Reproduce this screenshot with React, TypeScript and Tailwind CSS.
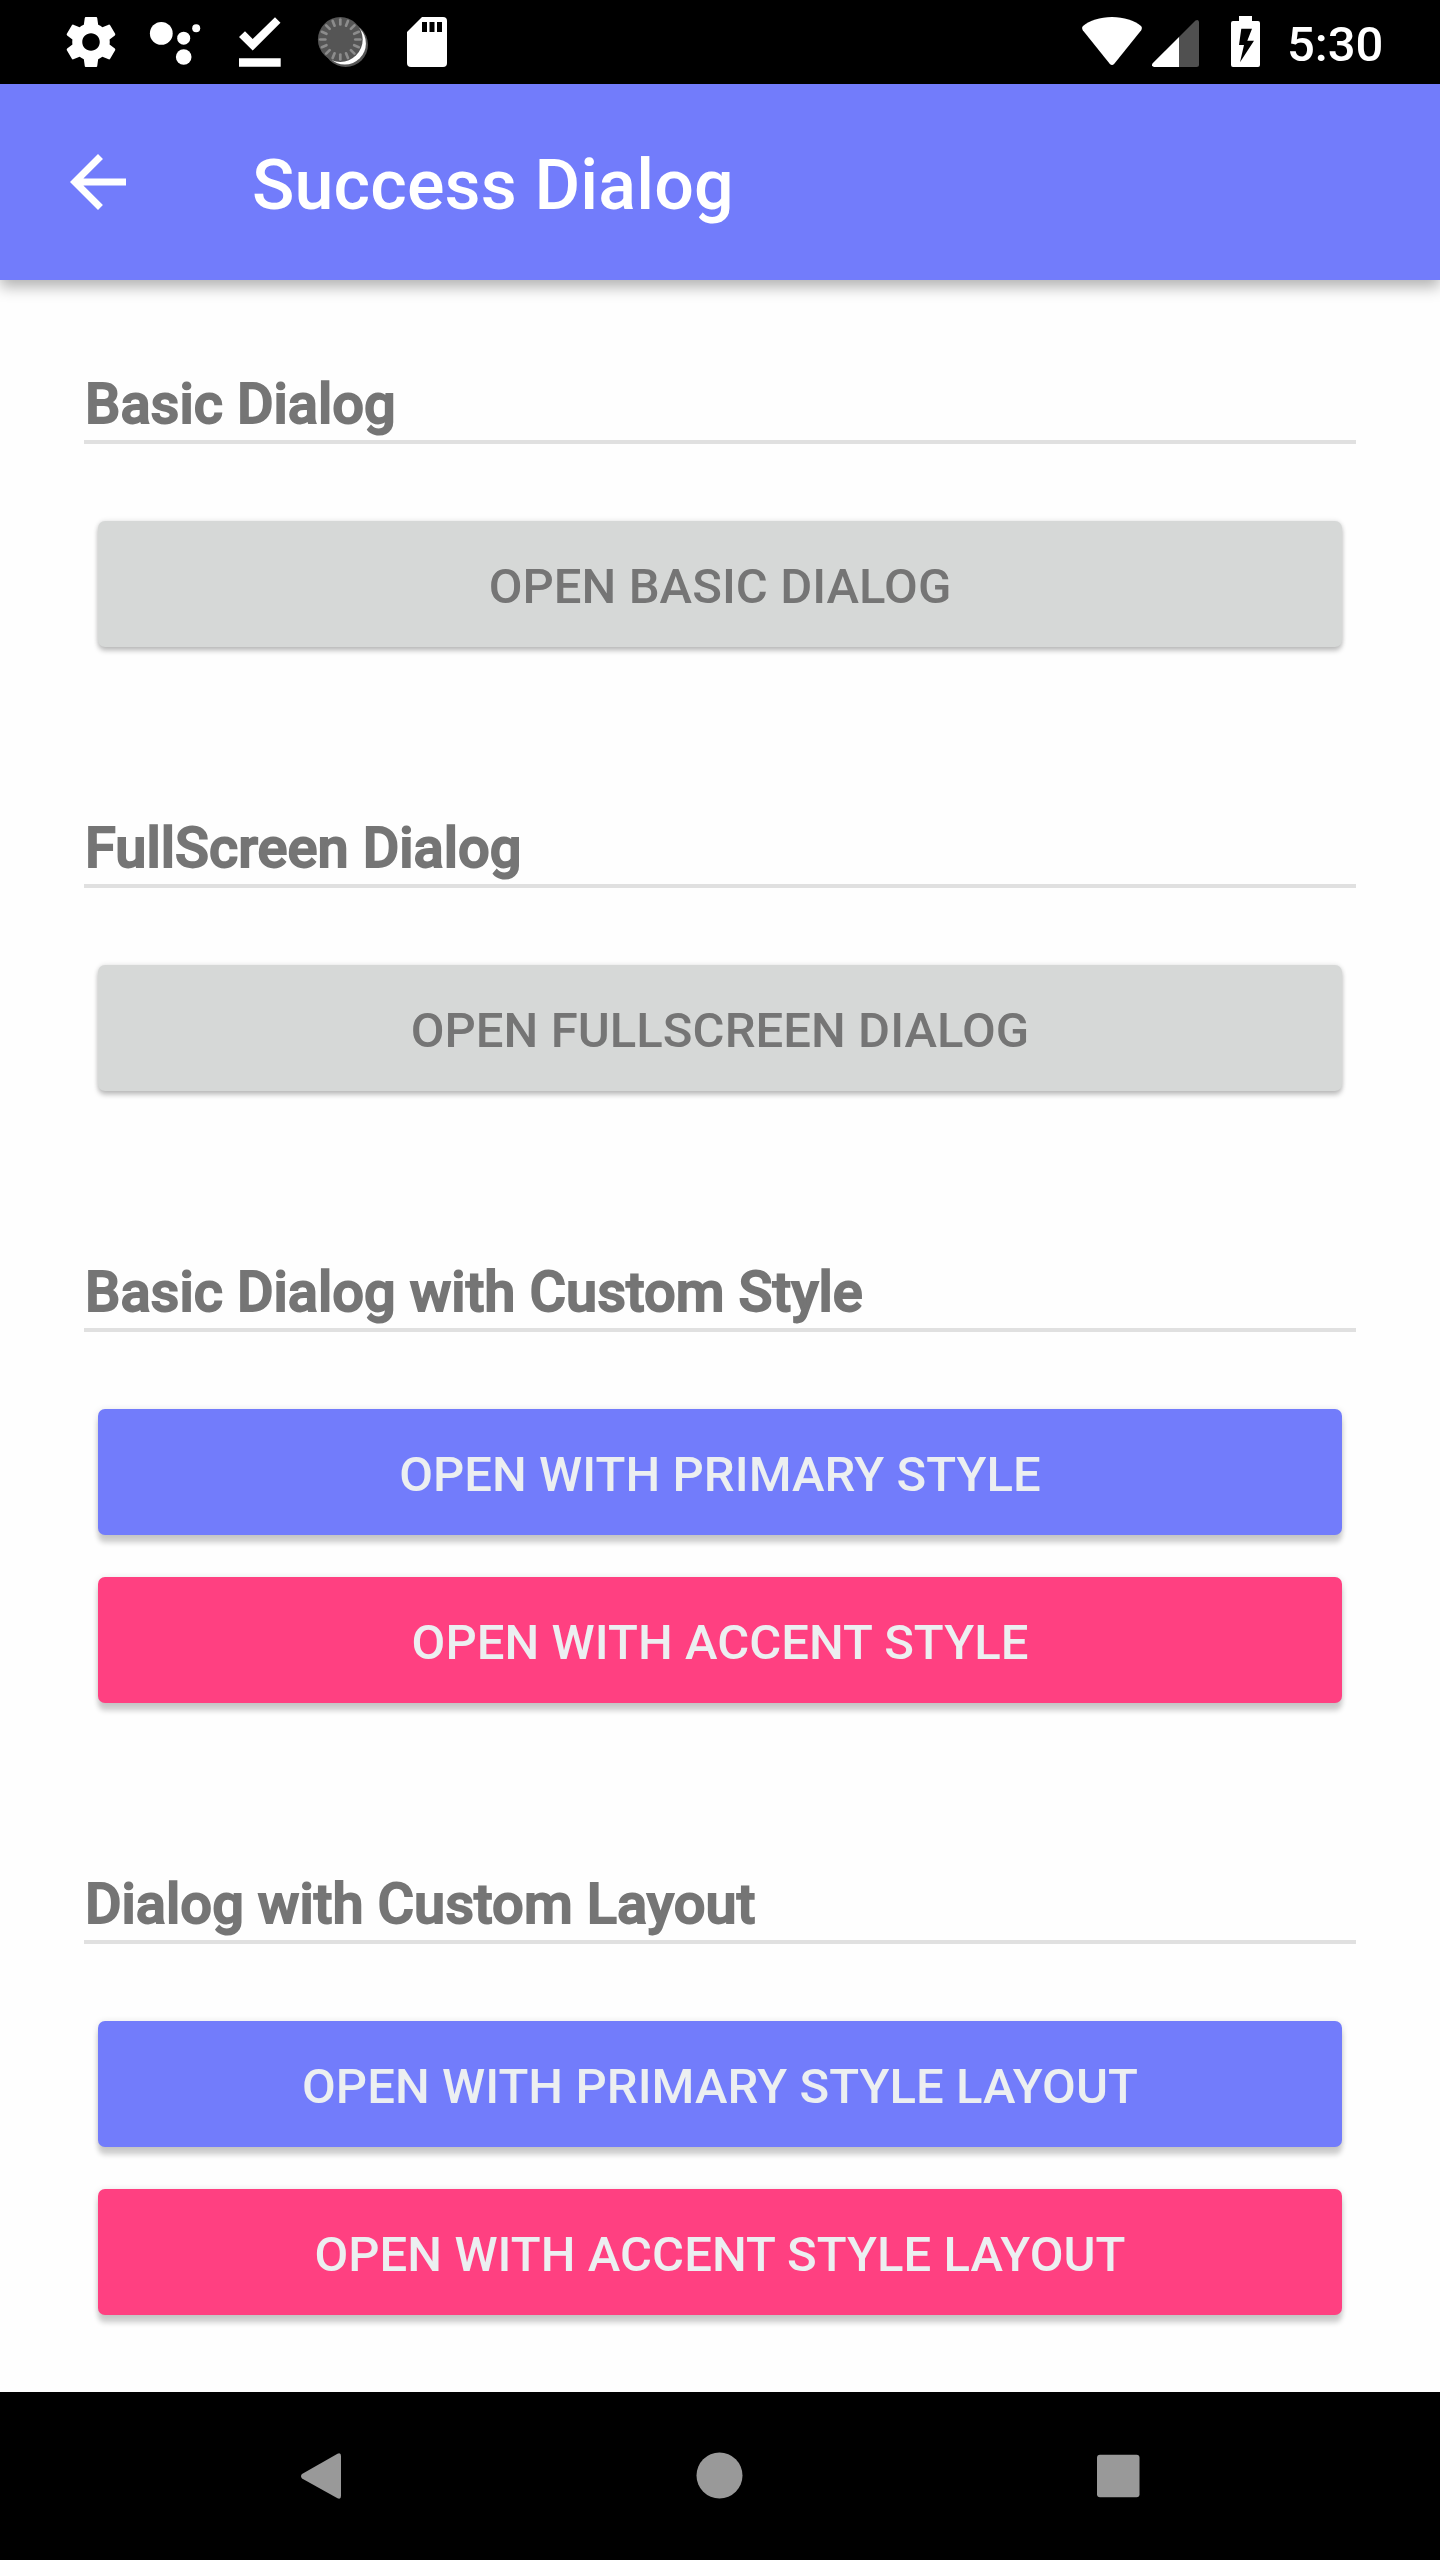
import React from "react";

const TICKS = Array.from({ length: 16 }, (_, i) => i * 22.5);

function StatusBar() {
  return (
    <div className="flex h-[84px] items-center justify-between bg-black pl-[49px] text-white">
      <div className="flex">
        <svg className="size-[84px]" viewBox="-4.8 -4.8 33.6 33.6" fill="currentColor">
          <path d="M19.43 12.98c.04-.32.07-.64.07-.98s-.03-.66-.07-.98l2.11-1.65c.19-.15.24-.42.12-.64l-2-3.46c-.12-.22-.39-.3-.61-.22l-2.49 1c-.52-.4-1.08-.73-1.69-.98l-.38-2.65C14.46 2.18 14.25 2 14 2h-4c-.25 0-.46.18-.49.42l-.38 2.65c-.61.25-1.17.59-1.69.98l-2.49-1c-.23-.09-.49 0-.61.22l-2 3.46c-.13.22-.07.49.12.64l2.11 1.65c-.04.32-.07.65-.07.98s.03.66.07.98l-2.11 1.65c-.19.15-.24.42-.12.64l2 3.46c.12.22.39.3.61.22l2.49-1c.52.4 1.08.73 1.69.98l.38 2.65c.03.24.24.42.49.42h4c.25 0 .46-.18.49-.42l.38-2.65c.61-.25 1.17-.59 1.69-.98l2.49 1c.23.09.49 0 .61-.22l2-3.46c.12-.22.07-.49-.12-.64l-2.11-1.65zM12 15.5c-1.93 0-3.5-1.57-3.5-3.5s1.57-3.5 3.5-3.5 3.5 1.57 3.5 3.5-1.57 3.5-3.5 3.5z" />
        </svg>
        <svg className="size-[84px]" viewBox="133 0 84 84" fill="currentColor">
          <circle cx="161.3" cy="33.4" r="11.4" />
          <circle cx="183.7" cy="38.2" r="6.5" />
          <circle cx="196.2" cy="28.2" r="4" />
          <circle cx="183.7" cy="57" r="7.8" />
        </svg>
        <svg className="size-[84px]" viewBox="217 0 84 84" fill="currentColor">
          <path d="M245 31.3L252.7 39L275 17.2L280.5 22.8L252.7 50.5L239 36.9ZM239 58.3H280.7V66.8H239Z" />
        </svg>
        <svg className="size-[84px]" viewBox="301 0 84 84">
          <circle cx="345.7" cy="44.7" r="22.3" fill="#555" />
          <circle cx="344.8" cy="43.4" r="21.1" fill="#fff" />
          <circle cx="340.3" cy="39.5" r="22.4" fill="#555" />
          <g stroke="#8c8c8c" strokeWidth="2.7" strokeLinecap="round">
            {TICKS.map((a) => (
              <path key={a} d="M340.3 19.5V24.5" transform={`rotate(${a} 340.3 39.5)`} />
            ))}
          </g>
        </svg>
        <svg className="size-[84px]" viewBox="385 0 84 84">
          <path d="M422 17H443A4 4 0 0 1 447 21V63A4 4 0 0 1 443 67H411A4 4 0 0 1 407 63V32Z" fill="#fff" />
          <path d="M422 22H427V32H422ZM429.5 22H434.5V32H429.5ZM437 22H442V32H437Z" />
        </svg>
      </div>
      <div className="flex items-center">
        <svg className="h-[84px] w-[60px]" viewBox="1082 0 60 84" fill="currentColor">
          <path d="M1112 17C1100 17 1089.5 20.5 1083 26Q1081.3 27.8 1082.8 30.2L1109.7 63.8Q1112 66.2 1114.3 63.8L1141.2 30.2Q1142.7 27.8 1141 26C1134.5 20.5 1124 17 1112 17Z" />
        </svg>
        <svg className="ml-[10px] h-[84px] w-[47px]" viewBox="1152 0 47 84">
          <path d="M1179 37V67H1196.5Q1199 67 1199 64.5V22Q1198.5 18.8 1195.5 20.5Z" fill="#505050" />
          <path d="M1179 37V67H1154Q1150.8 66 1152.7 63.3Z" fill="#fff" />
        </svg>
        <svg className="ml-8 h-[84px] w-[29px]" viewBox="1231 0 29 84">
          <path d="M1239 16H1252V21H1258Q1260 21 1260 23V65Q1260 67 1258 67H1233Q1231 67 1231 65V23Q1231 21 1233 21H1239Z" fill="#fff" />
          <path d="M1241.3 28.7H1252L1247.3 40.7H1254L1240 62.3L1244 45H1239Z" />
        </svg>
        <span className="w-[180px] pt-[5px] pl-[27px] text-[49px] leading-[57px] font-medium">5:30</span>
      </div>
    </div>
  );
}

function Section({ title, children }: { title: string; children: React.ReactNode }) {
  return (
    <section>
      <h2 className="h-[63px] pl-px text-[56px] leading-[64px] font-medium tracking-[0.02px] text-[#757575] [-webkit-text-stroke:1.8px_#757575]">
        {title}
      </h2>
      <div className="mt-[5px] h-1 bg-[#e0e0e0]" />
      <div className="mt-[77px] flex flex-col gap-[42px] px-[14px]">{children}</div>
    </section>
  );
}

const BUTTON = {
  plain: "bg-[#d6d8d7] text-[#757575] shadow-[0_4px_5px_rgba(0,0,0,0.22),0_0_5px_rgba(0,0,0,0.12)]",
  primary: "bg-[#727cfb] text-[#eceff1] shadow-[0_8px_5px_rgba(0,0,0,0.17),0_1px_7px_rgba(0,0,0,0.12)]",
  accent: "bg-[#ff4081] text-[#eceff1] shadow-[0_8px_5px_rgba(0,0,0,0.17),0_1px_7px_rgba(0,0,0,0.12)]",
};

function Button({ kind, children }: { kind: keyof typeof BUTTON; children: React.ReactNode }) {
  return (
    <button
      className={`flex h-[126px] items-center justify-center rounded-[7px] pt-[5px] text-[49px] leading-[57px] font-medium tracking-[0.06px] uppercase ${BUTTON[kind]}`}
    >
      {children}
    </button>
  );
}

export default function App() {
  return (
    <div className="flex h-[2560px] w-[1440px] flex-col overflow-hidden bg-[#fefefe] font-[Roboto,sans-serif]">
      <StatusBar />
      <header className="flex h-[196px] items-center bg-[#727cfb] pl-14 text-white shadow-[0_7px_14px_rgba(0,0,0,0.3)]">
        <svg className="size-[84px]" viewBox="0 0 24 24" fill="currentColor">
          <path d="M20 11H7.83l5.59-5.59L12 4l-8 8 8 8 1.41-1.41L7.83 13H20v-2z" />
        </svg>
        <h1 className="ml-28 pt-1.5 text-[70px] leading-[82px] font-medium tracking-[0.14px]">Success Dialog</h1>
      </header>
      <main className="flex flex-1 flex-col gap-[169px] px-[84px] pt-[92px]">
        <Section title="Basic Dialog">
          <Button kind="plain">Open Basic Dialog</Button>
        </Section>
        <Section title="FullScreen Dialog">
          <Button kind="plain">Open FullScreen Dialog</Button>
        </Section>
        <Section title="Basic Dialog with Custom Style">
          <Button kind="primary">Open with Primary Style</Button>
          <Button kind="accent">Open with Accent Style</Button>
        </Section>
        <Section title="Dialog with Custom Layout">
          <Button kind="primary">Open with Primary Style Layout</Button>
          <Button kind="accent">Open with Accent Style Layout</Button>
        </Section>
      </main>
      <nav className="flex h-[168px] shrink-0 items-center justify-between bg-black px-[279px] text-[#999]">
        <svg className="size-[84px]" viewBox="279 2434 84 84" fill="currentColor">
          <path d="M302 2474L337.5 2453.7Q341 2452.3 341 2456V2496Q341 2499.7 337.5 2498.3L302 2478.5Q300 2476.2 302 2474Z" />
        </svg>
        <svg className="size-[84px]" viewBox="678 2434 84 84" fill="currentColor">
          <circle cx="719.5" cy="2475.5" r="23" />
        </svg>
        <svg className="size-[84px]" viewBox="1077 2434 84 84" fill="currentColor">
          <rect x="1097" y="2454.7" width="42.5" height="42.5" rx="3" />
        </svg>
      </nav>
    </div>
  );
}
